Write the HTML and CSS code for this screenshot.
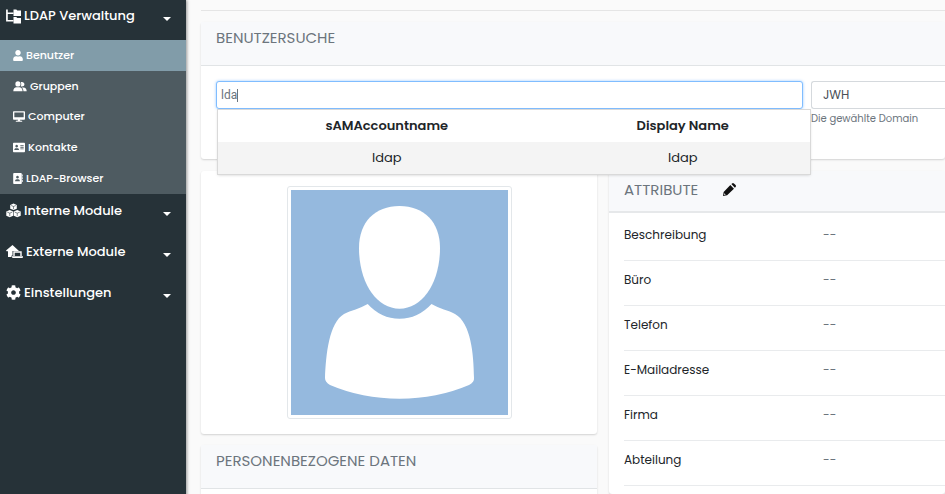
FILE: index.html
```html
<!DOCTYPE html>
<html lang="de">
<head>
<meta charset="utf-8">
<title>LDAP Verwaltung - Benutzer</title>
<link rel="stylesheet" href="styles.css">
</head>
<body>

<div class="wrapper">
  <nav class="sidebar">
    <button class="menu-button" type="button">
      <svg class="menu-icon" viewBox="0 0 16 15"><path d="M1 0v12h7M1 4h7" fill="none" stroke="#fff" stroke-width="1.800"/><path d="M8 0h3l1 1h4v6H8zM8 8h3l1 1h4v6H8z"/></svg>
      <span class="menu-label">LDAP Verwaltung</span>
      <span class="caret"></span>
    </button>
    <div class="submenu">
      <a class="submenu-link active" href="#"><svg class="icon-user" viewBox="0 0 448 512"><path d="M224 256c70.7 0 128-57.3 128-128S294.7 0 224 0 96 57.3 96 128s57.3 128 128 128zm89.6 32h-16.7c-22.2 10.2-46.9 16-72.9 16s-50.6-5.8-72.9-16h-16.7C60.2 288 0 348.2 0 422.4V464c0 26.5 21.5 48 48 48h352c26.5 0 48-21.5 48-48v-41.6c0-74.2-60.2-134.4-134.4-134.4z"/></svg>Benutzer</a>
      <a class="submenu-link" href="#"><svg class="icon-group" viewBox="0 0 640 512"><circle cx="224" cy="136" r="120"/><path d="M8 480c0-120 70-184 150-184h132c80 0 150 64 150 184zM352 250c30-50 35-120 5-190 90-35 170 20 170 95 0 80-90 130-175 95zM400 300h80c90 0 152 60 152 180H480c0-80-30-140-80-180z"/></svg>Gruppen</a>
      <a class="submenu-link" href="#"><svg class="icon-wide" viewBox="0 0 576 512"><path d="M528 0H48C21.500 0 0 21.500 0 48v320c0 26.500 21.500 48 48 48h192l-16 48h-72c-13.300 0-24 10.700-24 24s10.700 24 24 24h272c13.300 0 24-10.700 24-24s-10.700-24-24-24h-72l-16-48h192c26.500 0 48-21.500 48-48V48c0-26.500-21.500-48-48-48zm-16 288H64V64h448z"/></svg>Computer</a>
      <a class="submenu-link" href="#"><svg class="icon-wide" viewBox="0 0 576 512"><path fill-rule="evenodd" d="M48 32h480c26 0 48 22 48 48v352c0 26-22 48-48 48H48c-26 0-48-22-48-48V80c0-26 22-48 48-48zM176 128a64 64 0 1 0 .1 0zM64 376h224c0-56-30-88-80-88h-64c-50 0-80 32-80 88zM352 144v40h160v-40zM352 224v40h160v-40zM352 304v40h160v-40z"/></svg>Kontakte</a>
      <a class="submenu-link" href="#"><svg class="icon-user" viewBox="0 0 448 512"><path fill-rule="evenodd" d="M48 0h304c26 0 48 22 48 48v416c0 26-22 48-48 48H48c-26 0-48-22-48-48V48C0 22 22 0 48 0zM200 128a64 64 0 1 0 .1 0zM88 384h224c0-60-30-96-80-96h-64c-50 0-80 36-80 96zM416 64h32v96h-32zM416 192h32v96h-32zM416 320h32v96h-32z"/></svg>LDAP-Browser</a>
    </div>
    <button class="menu-button" type="button">
      <svg class="menu-icon" viewBox="0 0 16 15"><path d="M8 0l3.500 1.500v4L8 7 4.500 5.500v-4zM4 7l3.700 1.500v4.500L4 14.700.3 13V8.500zM12 7l3.700 1.500V13L12 14.700 8.300 13V8.500z"/><path d="M5.500 2.200L8 3.200l2.500-1M8 3.200v2.800M1.300 9.200L4 10.300l2.700-1.100M4 10.300v3.200M9.300 9.200l2.700 1.100 2.700-1.100M12 10.300v3.200" fill="none" stroke="#263238" stroke-width=".6"/></svg>
      <span class="menu-label">Interne Module</span>
      <span class="caret"></span>
    </button>
    <button class="menu-button" type="button">
      <svg class="menu-icon menu-icon-wide" viewBox="0 0 17 15"><path d="M6.500 1L0 6.500l1 1L2 7v6h3.500v-1.500h1V7H13z"/><path d="M8 12V8h7v4" fill="none" stroke="#fff" stroke-width="1.400"/><path d="M6 12.300h11v.7q0 1-1 1H7q-1 0-1-1z"/></svg>
      <span class="menu-label">Externe Module</span>
      <span class="caret"></span>
    </button>
    <button class="menu-button" type="button">
      <svg class="menu-icon" viewBox="0 0 512 512"><path d="M487.400 315.700l-42.600-24.600c4.300-23.200 4.300-47 0-70.200l42.600-24.600c4.900-2.800 7.100-8.600 5.500-14-11.100-35.600-30-67.800-54.700-94.600-3.800-4.100-10-5.100-14.800-2.300L380.800 110c-17.900-15.400-38.500-27.300-60.800-35.100V25.800c0-5.600-3.900-10.500-9.400-11.700-36.700-8.200-74.300-7.800-109.200 0-5.500 1.200-9.400 6.100-9.400 11.700V75c-22.200 7.900-42.800 19.800-60.800 35.100L88.700 85.500c-4.900-2.800-11-1.900-14.800 2.300-24.700 26.700-43.600 58.900-54.700 94.600-1.700 5.400.6 11.200 5.500 14L67.300 221c-4.300 23.200-4.300 47 0 70.200l-42.600 24.600c-4.900 2.800-7.100 8.600-5.500 14 11.100 35.600 30 67.800 54.700 94.600 3.800 4.100 10 5.100 14.800 2.300l42.600-24.600c17.900 15.400 38.500 27.300 60.800 35.100v49.200c0 5.600 3.900 10.500 9.400 11.700 36.700 8.200 74.300 7.800 109.200 0 5.500-1.200 9.400-6.100 9.400-11.700v-49.200c22.200-7.900 42.800-19.800 60.800-35.100l42.600 24.600c4.900 2.800 11 1.900 14.800-2.300 24.700-26.700 43.600-58.900 54.700-94.600 1.500-5.500-.7-11.300-5.600-14.100zM256 336c-44.100 0-80-35.900-80-80s35.900-80 80-80 80 35.900 80 80-35.900 80-80 80z"/></svg>
      <span class="menu-label">Einstellungen</span>
      <span class="caret"></span>
    </button>
  </nav>

  <main class="content">
    <hr class="divider">

    <section class="card search-card">
      <h2 class="card-header">BENUTZERSUCHE</h2>
      <form class="search-form">
        <div class="search-field">
          <input class="search-input" type="text" value="lda" aria-label="Benutzer suchen" autocomplete="off">
          <span class="text-cursor"></span>
          <table class="suggestions">
            <thead>
              <tr><th class="col-account">sAMAccountname</th><th>Display Name</th></tr>
            </thead>
            <tbody>
              <tr><td>ldap</td><td>ldap</td></tr>
            </tbody>
          </table>
        </div>
        <div class="domain-field">
          <select class="domain-select" id="domain">
            <option>JWH</option>
          </select>
          <label class="help-text" for="domain">Die gewählte Domain</label>
        </div>
      </form>
    </section>

    <div class="columns">
      <div class="column">
        <section class="card photo-card">
          <svg class="photo" viewBox="0 0 217 225" role="img" aria-label="Benutzerbild">
            <rect width="217" height="225" fill="#95b9de"/>
            <path fill="#fff" d="M108.500 16C133 16 149 32 149 58C149 92 132 118.700 108.500 118.700C85 118.700 68 92 68 58C68 32 84 16 108.500 16Z"/>
            <path fill="#fff" d="M76.700 114Q90 128.700 108.500 128.700Q127 128.700 140.500 114C148 118.500 158 120.500 164 124C180 133 182.700 164 183 188Q183.500 192 178 195Q146 208.700 108.500 208.700Q71 208.700 39 195Q34 192 34 188C35 164 38 133 53 124C60 120.500 69 118.500 76.700 114Z"/>
          </svg>
        </section>
        <section class="card person-card">
          <h2 class="card-header">PERSONENBEZOGENE DATEN</h2>
        </section>
      </div>

      <section class="card attribute-card">
        <div class="attribute-header">
          <h2 class="attribute-title">ATTRIBUTE</h2>
          <button class="edit-button" type="button" aria-label="Attribute bearbeiten">
            <svg class="pencil" viewBox="0 0 12 12"><path d="M6.800 1.900L10.100 5.200 3.800 11.400 0 12l.6-3.800zM7.700 1l.7-.6q.8-.8 1.700 0l1.500 1.500q.8.900 0 1.700l-.6.700z"/><path d="M.9 11.100l.4-1.600 1.200 1.200z" fill="#fff"/></svg>
          </button>
        </div>
        <table class="attributes">
          <tr><th>Beschreibung</th><td>--</td></tr>
          <tr><th>Büro</th><td>--</td></tr>
          <tr><th>Telefon</th><td>--</td></tr>
          <tr><th>E-Mailadresse</th><td>--</td></tr>
          <tr><th>Firma</th><td>--</td></tr>
          <tr><th>Abteilung</th><td>--</td></tr>
        </table>
      </section>
    </div>
  </main>
</div>

</body>
</html>
```

FILE: styles.css
```css
* {
  box-sizing: border-box;
}
body {
  margin: 0;
  background-color: #fafafa;
  color: #212529;
  font-family: "Poppins", "Inter", sans-serif;
  font-size: 13px;
}
.wrapper {
  display: flex;
  min-height: 100vh;
}

/* sidebar */
.sidebar {
  flex: 0 0 186px;
  background-color: #263238;
  box-shadow: 1px 0 3px rgba(0, 0, 0, 0.4);
}
.menu-button {
  display: flex;
  align-items: center;
  gap: 3px;
  width: 100%;
  height: 40px;
  padding: 0 15px 8px 6px;
  border: 0;
  background: none;
  color: #fff;
  font-family: inherit;
  font-size: 13px;
  font-weight: 500;
  text-align: left;
}
.submenu ~ .menu-button {
  height: 41px;
}
.menu-icon {
  width: 15px;
  height: 15px;
  fill: #fff;
}
.menu-icon-wide {
  width: 17px;
}
.menu-label {
  flex: 1;
}
.caret {
  margin-top: 6px;
  border-top: 4px solid #fff;
  border-left: 4px solid transparent;
  border-right: 4px solid transparent;
}
.submenu {
  display: grid;
  grid-auto-rows: 1fr;
  height: 154px;
  background-color: #4e5b61;
}
.submenu-link {
  display: flex;
  align-items: center;
  gap: 3px;
  padding-left: 13px;
  color: #fff;
  font-size: 11px;
  font-weight: 500;
  text-decoration: none;
}
.submenu-link.active {
  background-color: #819ca9;
}
.icon-user {
  width: 10px;
  height: 11px;
  fill: #fff;
}
.icon-wide {
  width: 12px;
  height: 11px;
  fill: #fff;
}
.icon-group {
  width: 14px;
  height: 11px;
  fill: #fff;
}

/* content */
.content {
  flex: 1;
  min-width: 0;
  padding: 10px 0 0 15px;
}
.divider {
  height: 1px;
  margin: 0 0 11px;
  border: 0;
  background-color: #e5e5e5;
}
.card {
  border-radius: 3px;
  background-color: #fff;
  box-shadow: 0 1px 2px rgba(0, 0, 0, 0.16);
}
.card-header {
  height: 44px;
  margin: 0;
  padding: 0 15px;
  border-bottom: 1px solid #e1e4e6;
  background-color: #f8f9fb;
  color: #6c757d;
  font-size: 15px;
  font-weight: 400;
  line-height: 32px;
}
.search-card {
  margin-bottom: 12px;
}
.search-form {
  display: grid;
  grid-template-columns: 1fr 134px;
  gap: 8px;
  padding: 15px 0 32px 15px;
}
.search-field {
  position: relative;
}
.search-input {
  display: block;
  width: 100%;
  height: 28px;
  padding: 0 4px;
  border: 1px solid #80bdff;
  border-radius: 3px;
  outline: 0;
  box-shadow: 0 0 3px rgba(0, 123, 255, 0.4);
  color: #6c757d;
  font-family: Roboto, sans-serif;
  font-size: 12px;
}
.text-cursor {
  position: absolute;
  top: 8px;
  left: 21px;
  width: 1px;
  height: 13px;
  background-color: #6c757d;
}
.suggestions {
  position: absolute;
  z-index: 1;
  top: 29px;
  left: 2px;
  width: calc(100% + 5px);
  border-collapse: collapse;
  background-color: #fff;
  box-shadow: 0 0 0 1px #d9d9d9, 0 1px 3px rgba(0, 0, 0, 0.2);
  font-size: 13px;
  text-align: center;
}
.suggestions th,
.suggestions td {
  height: 32px;
  padding: 0;
}
.suggestions th {
  font-weight: 600;
}
.suggestions td {
  background-color: #f4f4f4;
}
.col-account {
  width: 57%;
}
.domain-select {
  display: block;
  width: 100%;
  height: 28px;
  padding: 0 11px 1px;
  border: 1px solid #d5d9dd;
  border-right: 0;
  border-radius: 3px 0 0 3px;
  appearance: none;
  background-color: #fff;
  color: #495057;
  font-family: inherit;
  font-size: 12px;
}
.help-text {
  display: block;
  margin-top: 2px;
  color: #6c757d;
  font-size: 10px;
  line-height: 16px;
}
.columns {
  display: grid;
  grid-template-columns: 33fr 28fr;
  gap: 12px;
  align-items: start;
}
.photo-card {
  display: flex;
  justify-content: center;
  margin-bottom: 11px;
  padding: 15px;
}
.photo {
  width: 225px;
  height: 233px;
  padding: 3px;
  border: 1px solid #e3e7ea;
  border-radius: 3px;
}
.person-card {
  min-height: 60px;
}
.attribute-header {
  display: flex;
  align-items: center;
  gap: 25px;
  height: 42px;
  padding: 0 15px 4px;
  border-bottom: 2px solid #e6e8ea;
  background-color: #f8f9fb;
}
.attribute-title {
  margin: 0;
  color: #6c757d;
  font-size: 15px;
  font-weight: 400;
}
.edit-button {
  display: flex;
  padding: 0;
  border: 0;
  background: none;
}
.pencil {
  width: 13px;
  height: 13px;
  fill: #111;
}
.attributes {
  width: 100%;
  padding: 3px 0 8px 15px;
  border-spacing: 0;
  font-size: 12px;
}
.attributes th,
.attributes td {
  height: 45px;
  padding: 0 0 6px;
  border-bottom: 1px solid #e9ebed;
  text-align: left;
}
.attributes th {
  width: 62%;
  font-weight: 400;
}
.attributes td {
  color: #6c757d;
}
```
